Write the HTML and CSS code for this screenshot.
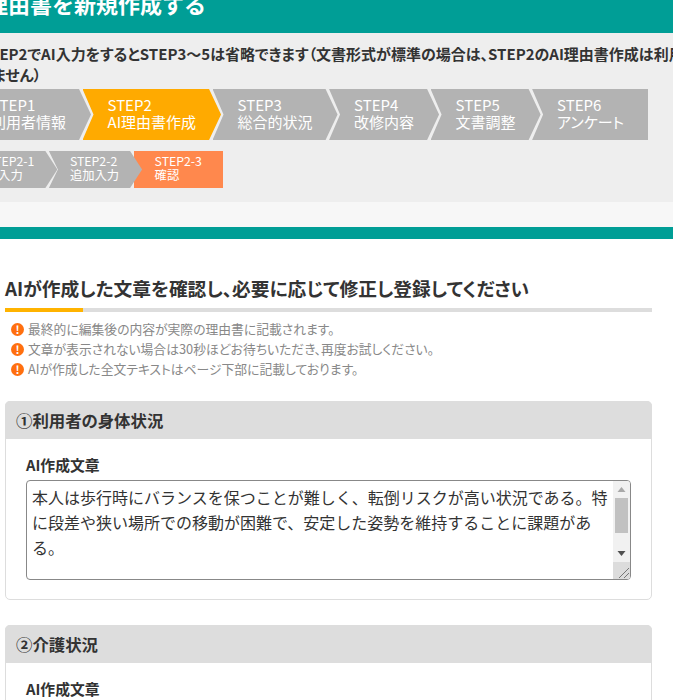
FILE: index.html
```html
<!DOCTYPE html>
<html lang="ja">
<head>
<meta charset="utf-8">
<title>理由書を新規作成する</title>
<link rel="stylesheet" href="styles.css">
</head>
<body>
<div class="page">
  <header class="title-band"><h1>理由書を新規作成する</h1></header>
  <section class="steps-area">
    <p class="lead">※STEP2でAI入力をするとSTEP3～5は省略できます（文書形式が標準の場合は、STEP2のAI理由書作成は利用できません）</p>
    <ol class="steps">
      <li class="step">STEP1<br>利用者情報</li>
      <li class="step step-active">STEP2<br>AI理由書作成</li>
      <li class="step">STEP3<br>総合的状況</li>
      <li class="step">STEP4<br>改修内容</li>
      <li class="step">STEP5<br>文書調整</li>
      <li class="step step-last">STEP6<br>アンケート</li>
    </ol>
    <ol class="substeps">
      <li class="substep">STEP2-1<br>AI入力</li>
      <li class="substep">STEP2-2<br>追加入力</li>
      <li class="substep substep-active">STEP2-3<br>確認</li>
    </ol>
  </section>
  <div class="pale-band"></div>
  <div class="teal-rule"></div>
  <main class="content">
    <h2 class="heading">AIが作成した文章を確認し、必要に応じて修正し登録してください</h2>
    <ul class="notes">
      <li><span class="note-icon">!</span>最終的に編集後の内容が実際の理由書に記載されます。</li>
      <li><span class="note-icon">!</span>文章が表示されない場合は30秒ほどお待ちいただき、再度お試しください。</li>
      <li><span class="note-icon">!</span>AIが作成した全文テキストはページ下部に記載しております。</li>
    </ul>
    <section class="card">
      <h3 class="card-head">①利用者の身体状況</h3>
      <div class="card-body">
        <label class="field-label" for="t1">AI作成文章</label>
        <div class="field-wrap">
          <textarea class="field" id="t1">本人は歩行時にバランスを保つことが難しく、転倒リスクが高い状況である。特に段差や狭い場所での移動が困難で、安定した姿勢を維持することに課題がある。</textarea>
          <div class="scrollbar" aria-hidden="true">
            <svg class="sb-btn" width="17" height="17" viewBox="0 0 17 17"><path d="M4.5 11h8L8.5 6z" fill="#a8a8a8"/></svg>
            <div class="sb-track"><div class="sb-thumb"></div></div>
            <svg class="sb-btn" width="17" height="17" viewBox="0 0 17 17"><path d="M4.5 6h8l-4 5z" fill="#505050"/></svg>
            <svg class="sb-corner" width="17" height="17" viewBox="0 0 17 17"><path d="M6 16L16 6M11 16l5-5" stroke="#777" stroke-width="1" fill="none"/></svg>
          </div>
        </div>
      </div>
    </section>
    <section class="card">
      <h3 class="card-head">②介護状況</h3>
      <div class="card-body">
        <label class="field-label" for="t2">AI作成文章</label>
        <div class="field-wrap">
          <textarea class="field" id="t2"></textarea>
        </div>
      </div>
    </section>
  </main>
</div>
</body>
</html>
```
FILE: styles.css
```css
* { box-sizing: border-box; }
html, body { margin: 0; padding: 0; overflow: hidden; height: 700px; background: #fff; }
body { font-family: "Noto Sans CJK JP", "Noto Sans", sans-serif; color: #333; }
.page { width: 725px; margin-left: -34px; font-feature-settings: "palt"; }

.title-band { background: #009e96; height: 33px; overflow: hidden; }
.title-band h1 { margin: -12px 0 0 20px; font-size: 22px; line-height: 30px; font-weight: 700; color: #fff; font-feature-settings: normal; }

.steps-area { background: #eee; height: 169px; padding-top: 10px; }
.lead { margin: 0; font-size: 15px; line-height: 21px; font-weight: 700; color: #333; }

ol { list-style: none; margin: 0; padding: 0; display: flex; }
.steps { margin: 4px 0 0; }
.step {
  height: 51px; padding: 7px 25px 0; margin-right: -8.5px;
  font-size: 15px; line-height: 17px; color: #fff; background: #b3b3b3;
  white-space: nowrap;
  clip-path: polygon(0 0, calc(100% - 12px) 0, 100% 50%, calc(100% - 12px) 100%, 0 100%, 11px 50%);
}
.step:first-child { clip-path: polygon(0 0, calc(100% - 12px) 0, 100% 50%, calc(100% - 12px) 100%, 0 100%); }
.step-active { background: #ffaa00; }
.step-last { padding-right: 24px; clip-path: polygon(0 0, 100% 0, 100% 100%, 0 100%, 11px 50%); }

.substeps { margin: 11px 0 0; }
.substep {
  height: 37px; padding: 3px 23px 0 21px; margin-right: -8.5px;
  font-size: 12.3px; line-height: 14px; color: #fff; background: #b3b3b3;
  white-space: nowrap;
  clip-path: polygon(0 0, calc(100% - 12px) 0, 100% 50%, calc(100% - 12px) 100%, 0 100%, 9px 50%);
}
.substep:first-child { clip-path: polygon(0 0, calc(100% - 12px) 0, 100% 50%, calc(100% - 12px) 100%, 0 100%); }
.substep-active { background: #ff884d; clip-path: none; padding-right: 21px; }

.pale-band { height: 25px; background: #f7f7f7; }
.teal-rule { height: 12px; background: #009e96; }

.content { padding: 36px 39px 0; }
.heading {
  margin: 0; height: 37px; font-size: 18.72px; line-height: 26px; font-weight: 700; color: #333;
  padding-bottom: 7px; position: relative;
  border-bottom: 4px solid #ddd;
}
.heading::after { content: ""; position: absolute; left: 0; bottom: -4px; width: 78px; height: 4px; background: #ffb300; }

.notes { list-style: none; margin: 7px 0 0; padding: 0 0 0 6px; font-size: 12.8px; line-height: 20px; color: #888; }
.notes li { display: flex; align-items: center; }
.note-icon {
  width: 13px; height: 13px; margin-right: 4px; border-radius: 50%; flex: none;
  background: #ff6f0f; color: #fff; font-size: 11px; line-height: 13px; font-weight: 700; text-align: center;
}

.card { margin-top: 25px; border: 1px solid #ddd; border-radius: 5px; height: 199px; }
.notes + .card { margin-top: 22px; }
.card-head {
  margin: -1px -1px 0; height: 37.5px; padding: 0 11px; background: #ddd; border-radius: 5px 5px 0 0;
  font-size: 16.4px; line-height: 38px; font-weight: 700; color: #333;
}
.card-body { padding: 16px 20px 0; }
.field-label { display: block; font-size: 14.8px; line-height: 20px; font-weight: 700; color: #333; margin-bottom: 5px; }
.field-wrap { position: relative; height: 100px; }
.field {
  display: block; width: 100%; height: 100px; padding: 4px 22px 5px 5px; border: 1px solid #888; border-radius: 4px;
  font-family: "Noto Sans CJK JP", sans-serif; font-size: 16px; line-height: 25px; color: #333; background: #fff;
  font-feature-settings: normal; overflow: hidden; resize: none;
}
.scrollbar {
  position: absolute; top: 1px; right: 1px; bottom: 1px; width: 17px;
  display: flex; flex-direction: column; background: #f1f1f1; border-radius: 0 3px 3px 0; overflow: hidden;
}
.sb-btn, .sb-corner { display: block; flex: none; }
.sb-corner { background: #dcdcdc; }
.sb-track { flex: 1; }
.sb-thumb { height: 35px; margin: 0 2px; background: #c1c1c1; }
```
